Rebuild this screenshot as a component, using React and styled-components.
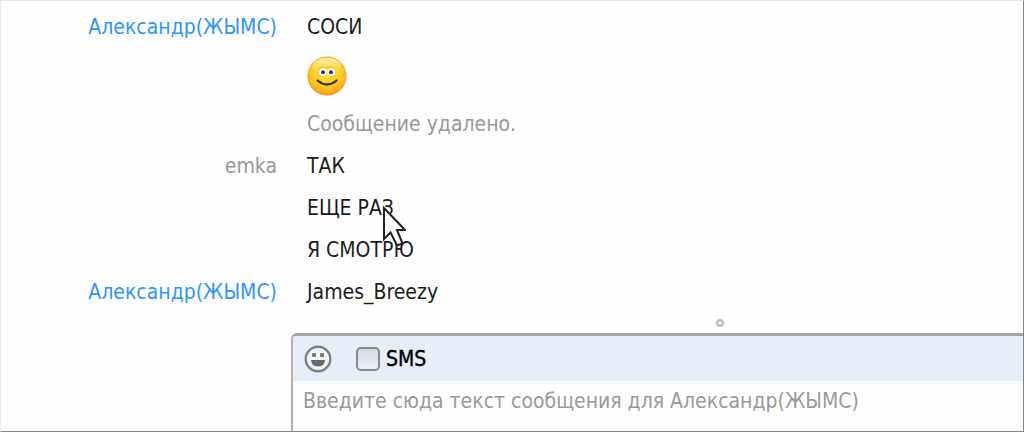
import React from 'react'
import styled, { createGlobalStyle } from 'styled-components'

const messages = [
  { author: "Александр(ЖЫМС)", text: "СОСИ" },
  { smile: true },
  { text: "Сообщение удалено.", removed: true },
  { author: "emka", own: true, text: "ТАК" },
  { text: "ЕЩЕ РАЗ" },
  { text: "Я СМОТРЮ" },
  { author: "Александр(ЖЫМС)", text: "James_Breezy" },
]

export default function App() {
  return (
    <>
      <GlobalStyle />
      <Window>
        <Messages>
          {messages.map((message, index) => (
            <Message key={index} $tall={message.smile}>
              <Author $own={message.own}>{message.author}</Author>
              {message.smile ? <Smile /> : <Text $removed={message.removed}>{message.text}</Text>}
            </Message>
          ))}
        </Messages>
        <Splitter>
          <Grip />
        </Splitter>
        <Composer>
          <Toolbar>
            <IconButton type="button" aria-label="Смайлики">
              <SmileOutline />
            </IconButton>
            <SmsLabel htmlFor="sms">
              <Checkbox id="sms" type="checkbox" />
              SMS
            </SmsLabel>
          </Toolbar>
          <Field
            rows={1}
            aria-label="Сообщение"
            placeholder="Введите сюда текст сообщения для Александр(ЖЫМС)"
          />
        </Composer>
        <Cursor viewBox="0 0 24 42" aria-hidden="true">
          <path d="M2 3V34L8.5 27.500L15 40.500L20.500 38.500L15 25H23Z" />
        </Cursor>
      </Window>
    </>
  );
}

function Smile() {
  return (
    <svg width="40" height="40" viewBox="0 0 40 40" role="img" aria-label="Улыбка">
      <defs>
        <radialGradient id="face" cx="50%" cy="36%" r="64%">
          <stop offset="0" stopColor="#ffe04a" />
          <stop offset="0.6" stopColor="#fdcb2a" />
          <stop offset="0.86" stopColor="#fbb01c" />
          <stop offset="1" stopColor="#f28a1c" />
        </radialGradient>
        <linearGradient id="shine" x1="0" y1="0" x2="0" y2="1">
          <stop offset="0" stopColor="#fffbd0" stopOpacity="0.8" />
          <stop offset="1" stopColor="#ffe770" stopOpacity="0" />
        </linearGradient>
      </defs>
      <circle cx="20" cy="20" r="19.5" fill="url(#face)" />
      <circle cx="20" cy="20" r="19" fill="none" stroke="#f5a13a" strokeOpacity="0.7" />
      <ellipse cx="20" cy="10" rx="14" ry="8" fill="url(#shine)" />
      <path d="M11.500 13.500Q15.500 9 20 12Q24.500 9 28.500 13.500" fill="none" stroke="#f7b52a" strokeWidth="1" />
      <ellipse cx="15.800" cy="16.300" rx="3.800" ry="3.500" fill="#fff" />
      <ellipse cx="24.200" cy="16.300" rx="3.800" ry="3.500" fill="#fff" />
      <circle cx="16" cy="16.300" r="2" fill="#25326b" />
      <circle cx="24" cy="16.300" r="2" fill="#25326b" />
      <path d="M10.500 24.500Q20 32.500 29.500 24.500" fill="none" stroke="#3f3508" strokeWidth="2.200" strokeLinecap="round" />
    </svg>
  );
}

function SmileOutline() {
  return (
    <svg width="28" height="28" viewBox="0 0 28 28" aria-hidden="true">
      <circle cx="14" cy="14" r="12.300" fill="#f2f4f6" stroke="#7d8084" strokeWidth="2.400" />
      <rect x="8" y="8" width="4" height="4" rx="1" fill="#74777b" />
      <rect x="16" y="8" width="4" height="4" rx="1" fill="#74777b" />
      <path d="M7 15H21Q20.500 21.500 14 21.500Q7.500 21.500 7 15Z" fill="#66696d" />
    </svg>
  );
}

const GlobalStyle = createGlobalStyle`
  * {
    box-sizing: border-box;
  }
  body {
    margin: 0;
    background-color: #fefefe;
    font-family: Tahoma, "DejaVu Sans Condensed", "DejaVu Sans", sans-serif;
    font-size: 21px;
    line-height: 28px;
    color: #1c1c1c;
  }
`;

const Window = styled.main`
  position: relative;
  display: flex;
  flex-direction: column;
  min-height: 100vh;
  padding-top: 5px;
  border: 1px solid #e9e9e9;
  border-right-color: #858585;
  border-bottom-color: #858585;
`;

const Messages = styled.div`
  display: flex;
  flex-direction: column;
`;

const Message = styled.div`
  display: grid;
  grid-template-columns: 276px 1fr;
  column-gap: 30px;
  align-items: center;
  height: ${({ $tall }) => ($tall ? "55px" : "42px")};
`;

const Author = styled.span`
  text-align: right;
  color: ${({ $own }) => ($own ? "#999999" : "#2f95fb")};
`;

const Text = styled.span`
  color: ${({ $removed }) => ($removed ? "#999999" : "inherit")};
`;

const Splitter = styled.div`
  display: flex;
  align-items: center;
  justify-content: center;
  height: 20px;
  margin-left: 415px;
`;

const Grip = styled.span`
  width: 8px;
  height: 8px;
  border: 2px solid #b4c2d4;
  border-radius: 50%;
  background-color: #e4ebf3;
`;

const Composer = styled.section`
  display: flex;
  flex: 1;
  flex-direction: column;
  margin-left: 290px;
  overflow: hidden;
  border-top: 3px solid #a3a3a1;
  border-left: 2px solid #b0b0b0;
  border-top-left-radius: 6px;
`;

const Toolbar = styled.div`
  display: flex;
  align-items: center;
  gap: 24px;
  height: 45px;
  padding-left: 11px;
  background-color: #e6eef8;
`;

const IconButton = styled.button`
  display: flex;
  padding: 0;
  border: 0;
  background: none;
`;

const SmsLabel = styled.label`
  display: flex;
  align-items: center;
  gap: 6px;
  color: #000;
  -webkit-text-stroke: 0.4px #000;
`;

const Checkbox = styled.input`
  appearance: none;
  width: 24px;
  height: 24px;
  margin: 0;
  border: 2px solid #85888c;
  border-radius: 5px;
  background: linear-gradient(#d3dae2, #eceff3);
`;

const Field = styled.textarea`
  flex: 1;
  width: 100%;
  padding: 6px 10px;
  border: 0;
  outline: 0;
  resize: none;
  overflow: hidden;
  background: none;
  font: inherit;
  color: inherit;
  &::placeholder {
    color: #999999;
    opacity: 1;
  }
`;

const Cursor = styled.svg`
  position: absolute;
  top: 204px;
  left: 381px;
  width: 24px;
  height: 42px;
  pointer-events: none;
  path {
    fill: #fff;
    stroke: #222;
    stroke-width: 2;
  }
`;
